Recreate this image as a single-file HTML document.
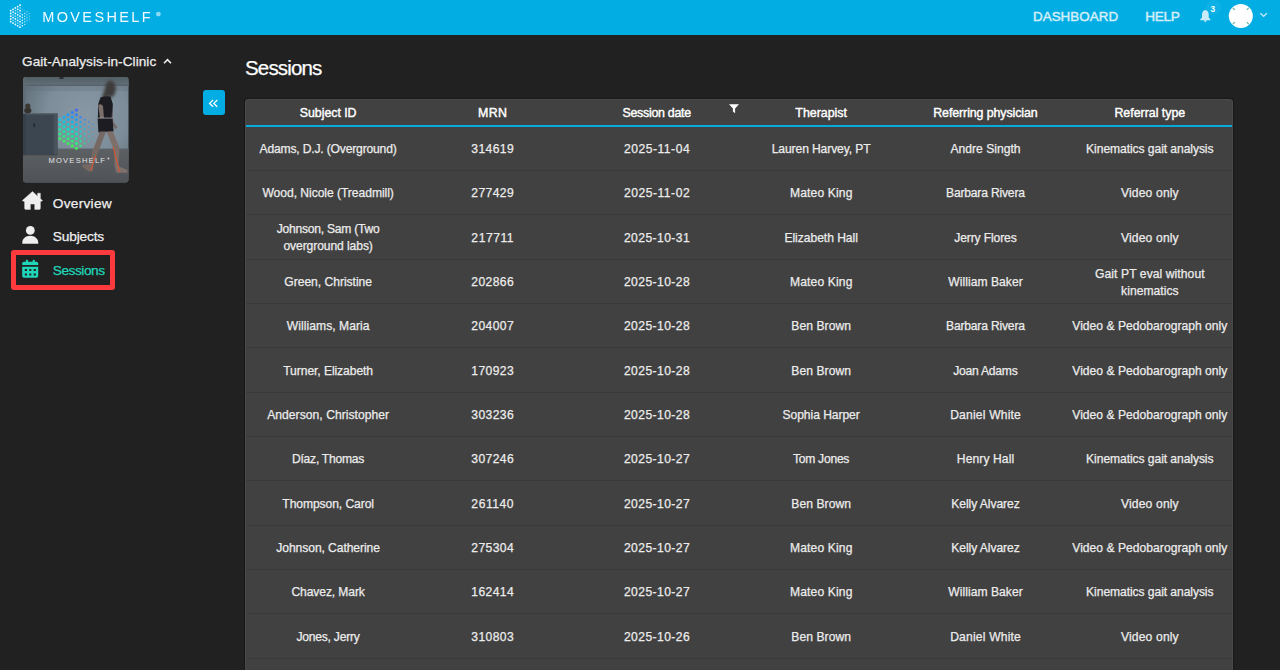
<!DOCTYPE html>
<html><head><meta charset="utf-8">
<style>
html,body{margin:0;padding:0;width:1280px;height:670px;overflow:hidden;background:#212121;font-family:"Liberation Sans",sans-serif;}
.t{position:absolute;white-space:nowrap;line-height:1;-webkit-text-stroke:0.25px currentColor;}
#hdr{position:absolute;left:0;top:0;width:1280px;height:35px;background:#02ade4;}
#tbl{position:absolute;left:245px;top:99px;width:986px;height:600px;background:#414141;border:1px solid #4a4a4a;border-radius:3px;box-shadow:0 0 1px 1px rgba(0,0,0,0.25);}
#thead{position:absolute;left:0;top:0;width:986px;height:25px;border-bottom:2px solid #0aa9dd;}
.rd{position:absolute;left:0;width:986px;height:1px;background:#3a3a3a;}
#redbox{position:absolute;left:11px;top:250px;width:94px;height:30px;border:5px solid #fd3b3e;border-radius:3px;}
#collapse{position:absolute;left:203px;top:90px;width:22px;height:25px;background:#02ade4;border-radius:3px;}
#ov{position:absolute;left:0;top:0;}
</style></head><body>
<div id="hdr"></div>
<div id="tbl"><div id="thead"></div>
<div class="rd" style="top:69.90px"></div>
<div class="rd" style="top:114.23px"></div>
<div class="rd" style="top:158.57px"></div>
<div class="rd" style="top:202.90px"></div>
<div class="rd" style="top:247.23px"></div>
<div class="rd" style="top:291.56px"></div>
<div class="rd" style="top:335.90px"></div>
<div class="rd" style="top:380.23px"></div>
<div class="rd" style="top:424.56px"></div>
<div class="rd" style="top:468.90px"></div>
<div class="rd" style="top:513.23px"></div>
<div class="rd" style="top:557.56px"></div>
</div>
<div id="redbox"></div>
<div id="collapse"></div>
<div class="t" style="top:106.80px;font-size:12.4px;font-weight:400;color:#ffffff;letter-spacing:-0.044px;left:246.00px;width:164.33px;text-align:center;text-indent:-0.044px;-webkit-text-stroke:0.4px #fff;">Subject ID</div>
<div class="t" style="top:106.80px;font-size:12.4px;font-weight:400;color:#ffffff;letter-spacing:0.266px;left:410.33px;width:164.33px;text-align:center;text-indent:0.266px;-webkit-text-stroke:0.4px #fff;">MRN</div>
<div class="t" style="top:106.80px;font-size:12.4px;font-weight:400;color:#ffffff;letter-spacing:-0.267px;left:574.67px;width:164.33px;text-align:center;text-indent:-0.267px;-webkit-text-stroke:0.4px #fff;">Session date</div>
<div class="t" style="top:106.80px;font-size:12.4px;font-weight:400;color:#ffffff;letter-spacing:-0.005px;left:739.00px;width:164.33px;text-align:center;text-indent:-0.005px;-webkit-text-stroke:0.4px #fff;">Therapist</div>
<div class="t" style="top:106.80px;font-size:12.4px;font-weight:400;color:#ffffff;letter-spacing:-0.090px;left:903.33px;width:164.33px;text-align:center;text-indent:-0.090px;-webkit-text-stroke:0.4px #fff;">Referring physician</div>
<div class="t" style="top:106.80px;font-size:12.4px;font-weight:400;color:#ffffff;letter-spacing:-0.012px;left:1067.67px;width:164.33px;text-align:center;text-indent:-0.012px;-webkit-text-stroke:0.4px #fff;">Referral type</div>
<div class="t" style="top:143.10px;font-size:12.1px;font-weight:400;color:#ececec;letter-spacing:-0.172px;left:246.00px;width:164.33px;text-align:center;text-indent:-0.172px;">Adams, D.J. (Overground)</div>
<div class="t" style="top:143.10px;font-size:12.1px;font-weight:400;color:#ececec;letter-spacing:0.406px;left:410.33px;width:164.33px;text-align:center;text-indent:0.406px;">314619</div>
<div class="t" style="top:143.10px;font-size:12.1px;font-weight:400;color:#ececec;letter-spacing:0.523px;left:574.67px;width:164.33px;text-align:center;text-indent:0.523px;">2025-11-04</div>
<div class="t" style="top:143.10px;font-size:12.1px;font-weight:400;color:#ececec;letter-spacing:-0.108px;left:739.00px;width:164.33px;text-align:center;text-indent:-0.108px;">Lauren Harvey, PT</div>
<div class="t" style="top:143.10px;font-size:12.1px;font-weight:400;color:#ececec;letter-spacing:0.007px;left:903.33px;width:164.33px;text-align:center;text-indent:0.007px;">Andre Singth</div>
<div class="t" style="top:143.10px;font-size:12.1px;font-weight:400;color:#ececec;letter-spacing:-0.071px;left:1067.67px;width:164.33px;text-align:center;text-indent:-0.071px;">Kinematics gait analysis</div>
<div class="t" style="top:187.44px;font-size:12.1px;font-weight:400;color:#ececec;letter-spacing:-0.042px;left:246.00px;width:164.33px;text-align:center;text-indent:-0.042px;">Wood, Nicole (Treadmill)</div>
<div class="t" style="top:187.44px;font-size:12.1px;font-weight:400;color:#ececec;letter-spacing:0.406px;left:410.33px;width:164.33px;text-align:center;text-indent:0.406px;">277429</div>
<div class="t" style="top:187.44px;font-size:12.1px;font-weight:400;color:#ececec;letter-spacing:0.523px;left:574.67px;width:164.33px;text-align:center;text-indent:0.523px;">2025-11-02</div>
<div class="t" style="top:187.44px;font-size:12.1px;font-weight:400;color:#ececec;letter-spacing:0.142px;left:739.00px;width:164.33px;text-align:center;text-indent:0.142px;">Mateo King</div>
<div class="t" style="top:187.44px;font-size:12.1px;font-weight:400;color:#ececec;letter-spacing:-0.181px;left:903.33px;width:164.33px;text-align:center;text-indent:-0.181px;">Barbara Rivera</div>
<div class="t" style="top:187.44px;font-size:12.1px;font-weight:400;color:#ececec;letter-spacing:0.159px;left:1067.67px;width:164.33px;text-align:center;text-indent:0.159px;">Video only</div>
<div class="t" style="top:223.32px;font-size:12.1px;font-weight:400;color:#ececec;letter-spacing:-0.244px;left:246.00px;width:164.33px;text-align:center;text-indent:-0.244px;">Johnson, Sam (Two</div>
<div class="t" style="top:240.22px;font-size:12.1px;font-weight:400;color:#ececec;letter-spacing:-0.086px;left:246.00px;width:164.33px;text-align:center;text-indent:-0.086px;">overground labs)</div>
<div class="t" style="top:231.77px;font-size:12.1px;font-weight:400;color:#ececec;letter-spacing:0.555px;left:410.33px;width:164.33px;text-align:center;text-indent:0.555px;">217711</div>
<div class="t" style="top:231.77px;font-size:12.1px;font-weight:400;color:#ececec;letter-spacing:0.433px;left:574.67px;width:164.33px;text-align:center;text-indent:0.433px;">2025-10-31</div>
<div class="t" style="top:231.77px;font-size:12.1px;font-weight:400;color:#ececec;letter-spacing:-0.036px;left:739.00px;width:164.33px;text-align:center;text-indent:-0.036px;">Elizabeth Hall</div>
<div class="t" style="top:231.77px;font-size:12.1px;font-weight:400;color:#ececec;letter-spacing:-0.122px;left:903.33px;width:164.33px;text-align:center;text-indent:-0.122px;">Jerry Flores</div>
<div class="t" style="top:231.77px;font-size:12.1px;font-weight:400;color:#ececec;letter-spacing:0.159px;left:1067.67px;width:164.33px;text-align:center;text-indent:0.159px;">Video only</div>
<div class="t" style="top:276.10px;font-size:12.1px;font-weight:400;color:#ececec;letter-spacing:-0.025px;left:246.00px;width:164.33px;text-align:center;text-indent:-0.025px;">Green, Christine</div>
<div class="t" style="top:276.10px;font-size:12.1px;font-weight:400;color:#ececec;letter-spacing:0.406px;left:410.33px;width:164.33px;text-align:center;text-indent:0.406px;">202866</div>
<div class="t" style="top:276.10px;font-size:12.1px;font-weight:400;color:#ececec;letter-spacing:0.433px;left:574.67px;width:164.33px;text-align:center;text-indent:0.433px;">2025-10-28</div>
<div class="t" style="top:276.10px;font-size:12.1px;font-weight:400;color:#ececec;letter-spacing:0.142px;left:739.00px;width:164.33px;text-align:center;text-indent:0.142px;">Mateo King</div>
<div class="t" style="top:276.10px;font-size:12.1px;font-weight:400;color:#ececec;letter-spacing:0.053px;left:903.33px;width:164.33px;text-align:center;text-indent:0.053px;">William Baker</div>
<div class="t" style="top:267.65px;font-size:12.1px;font-weight:400;color:#ececec;letter-spacing:0.080px;left:1067.67px;width:164.33px;text-align:center;text-indent:0.080px;">Gait PT eval without</div>
<div class="t" style="top:284.55px;font-size:12.1px;font-weight:400;color:#ececec;letter-spacing:0.033px;left:1067.67px;width:164.33px;text-align:center;text-indent:0.033px;">kinematics</div>
<div class="t" style="top:320.44px;font-size:12.1px;font-weight:400;color:#ececec;letter-spacing:0.053px;left:246.00px;width:164.33px;text-align:center;text-indent:0.053px;">Williams, Maria</div>
<div class="t" style="top:320.44px;font-size:12.1px;font-weight:400;color:#ececec;letter-spacing:0.406px;left:410.33px;width:164.33px;text-align:center;text-indent:0.406px;">204007</div>
<div class="t" style="top:320.44px;font-size:12.1px;font-weight:400;color:#ececec;letter-spacing:0.433px;left:574.67px;width:164.33px;text-align:center;text-indent:0.433px;">2025-10-28</div>
<div class="t" style="top:320.44px;font-size:12.1px;font-weight:400;color:#ececec;letter-spacing:0.071px;left:739.00px;width:164.33px;text-align:center;text-indent:0.071px;">Ben Brown</div>
<div class="t" style="top:320.44px;font-size:12.1px;font-weight:400;color:#ececec;letter-spacing:-0.181px;left:903.33px;width:164.33px;text-align:center;text-indent:-0.181px;">Barbara Rivera</div>
<div class="t" style="top:320.44px;font-size:12.1px;font-weight:400;color:#ececec;letter-spacing:0.026px;left:1067.67px;width:164.33px;text-align:center;text-indent:0.026px;">Video &amp; Pedobarograph only</div>
<div class="t" style="top:364.77px;font-size:12.1px;font-weight:400;color:#ececec;letter-spacing:-0.072px;left:246.00px;width:164.33px;text-align:center;text-indent:-0.072px;">Turner, Elizabeth</div>
<div class="t" style="top:364.77px;font-size:12.1px;font-weight:400;color:#ececec;letter-spacing:0.406px;left:410.33px;width:164.33px;text-align:center;text-indent:0.406px;">170923</div>
<div class="t" style="top:364.77px;font-size:12.1px;font-weight:400;color:#ececec;letter-spacing:0.433px;left:574.67px;width:164.33px;text-align:center;text-indent:0.433px;">2025-10-28</div>
<div class="t" style="top:364.77px;font-size:12.1px;font-weight:400;color:#ececec;letter-spacing:0.071px;left:739.00px;width:164.33px;text-align:center;text-indent:0.071px;">Ben Brown</div>
<div class="t" style="top:364.77px;font-size:12.1px;font-weight:400;color:#ececec;letter-spacing:-0.228px;left:903.33px;width:164.33px;text-align:center;text-indent:-0.228px;">Joan Adams</div>
<div class="t" style="top:364.77px;font-size:12.1px;font-weight:400;color:#ececec;letter-spacing:0.026px;left:1067.67px;width:164.33px;text-align:center;text-indent:0.026px;">Video &amp; Pedobarograph only</div>
<div class="t" style="top:409.10px;font-size:12.1px;font-weight:400;color:#ececec;letter-spacing:0.046px;left:246.00px;width:164.33px;text-align:center;text-indent:0.046px;">Anderson, Christopher</div>
<div class="t" style="top:409.10px;font-size:12.1px;font-weight:400;color:#ececec;letter-spacing:0.406px;left:410.33px;width:164.33px;text-align:center;text-indent:0.406px;">303236</div>
<div class="t" style="top:409.10px;font-size:12.1px;font-weight:400;color:#ececec;letter-spacing:0.433px;left:574.67px;width:164.33px;text-align:center;text-indent:0.433px;">2025-10-28</div>
<div class="t" style="top:409.10px;font-size:12.1px;font-weight:400;color:#ececec;letter-spacing:-0.058px;left:739.00px;width:164.33px;text-align:center;text-indent:-0.058px;">Sophia Harper</div>
<div class="t" style="top:409.10px;font-size:12.1px;font-weight:400;color:#ececec;letter-spacing:0.191px;left:903.33px;width:164.33px;text-align:center;text-indent:0.191px;">Daniel White</div>
<div class="t" style="top:409.10px;font-size:12.1px;font-weight:400;color:#ececec;letter-spacing:0.026px;left:1067.67px;width:164.33px;text-align:center;text-indent:0.026px;">Video &amp; Pedobarograph only</div>
<div class="t" style="top:453.44px;font-size:12.1px;font-weight:400;color:#ececec;letter-spacing:-0.258px;left:246.00px;width:164.33px;text-align:center;text-indent:-0.258px;">Díaz, Thomas</div>
<div class="t" style="top:453.44px;font-size:12.1px;font-weight:400;color:#ececec;letter-spacing:0.406px;left:410.33px;width:164.33px;text-align:center;text-indent:0.406px;">307246</div>
<div class="t" style="top:453.44px;font-size:12.1px;font-weight:400;color:#ececec;letter-spacing:0.433px;left:574.67px;width:164.33px;text-align:center;text-indent:0.433px;">2025-10-27</div>
<div class="t" style="top:453.44px;font-size:12.1px;font-weight:400;color:#ececec;letter-spacing:-0.247px;left:739.00px;width:164.33px;text-align:center;text-indent:-0.247px;">Tom Jones</div>
<div class="t" style="top:453.44px;font-size:12.1px;font-weight:400;color:#ececec;letter-spacing:0.087px;left:903.33px;width:164.33px;text-align:center;text-indent:0.087px;">Henry Hall</div>
<div class="t" style="top:453.44px;font-size:12.1px;font-weight:400;color:#ececec;letter-spacing:-0.071px;left:1067.67px;width:164.33px;text-align:center;text-indent:-0.071px;">Kinematics gait analysis</div>
<div class="t" style="top:497.77px;font-size:12.1px;font-weight:400;color:#ececec;letter-spacing:-0.082px;left:246.00px;width:164.33px;text-align:center;text-indent:-0.082px;">Thompson, Carol</div>
<div class="t" style="top:497.77px;font-size:12.1px;font-weight:400;color:#ececec;letter-spacing:0.555px;left:410.33px;width:164.33px;text-align:center;text-indent:0.555px;">261140</div>
<div class="t" style="top:497.77px;font-size:12.1px;font-weight:400;color:#ececec;letter-spacing:0.433px;left:574.67px;width:164.33px;text-align:center;text-indent:0.433px;">2025-10-27</div>
<div class="t" style="top:497.77px;font-size:12.1px;font-weight:400;color:#ececec;letter-spacing:0.071px;left:739.00px;width:164.33px;text-align:center;text-indent:0.071px;">Ben Brown</div>
<div class="t" style="top:497.77px;font-size:12.1px;font-weight:400;color:#ececec;letter-spacing:-0.052px;left:903.33px;width:164.33px;text-align:center;text-indent:-0.052px;">Kelly Alvarez</div>
<div class="t" style="top:497.77px;font-size:12.1px;font-weight:400;color:#ececec;letter-spacing:0.159px;left:1067.67px;width:164.33px;text-align:center;text-indent:0.159px;">Video only</div>
<div class="t" style="top:542.10px;font-size:12.1px;font-weight:400;color:#ececec;letter-spacing:-0.074px;left:246.00px;width:164.33px;text-align:center;text-indent:-0.074px;">Johnson, Catherine</div>
<div class="t" style="top:542.10px;font-size:12.1px;font-weight:400;color:#ececec;letter-spacing:0.406px;left:410.33px;width:164.33px;text-align:center;text-indent:0.406px;">275304</div>
<div class="t" style="top:542.10px;font-size:12.1px;font-weight:400;color:#ececec;letter-spacing:0.433px;left:574.67px;width:164.33px;text-align:center;text-indent:0.433px;">2025-10-27</div>
<div class="t" style="top:542.10px;font-size:12.1px;font-weight:400;color:#ececec;letter-spacing:0.142px;left:739.00px;width:164.33px;text-align:center;text-indent:0.142px;">Mateo King</div>
<div class="t" style="top:542.10px;font-size:12.1px;font-weight:400;color:#ececec;letter-spacing:-0.052px;left:903.33px;width:164.33px;text-align:center;text-indent:-0.052px;">Kelly Alvarez</div>
<div class="t" style="top:542.10px;font-size:12.1px;font-weight:400;color:#ececec;letter-spacing:0.026px;left:1067.67px;width:164.33px;text-align:center;text-indent:0.026px;">Video &amp; Pedobarograph only</div>
<div class="t" style="top:586.43px;font-size:12.1px;font-weight:400;color:#ececec;letter-spacing:-0.109px;left:246.00px;width:164.33px;text-align:center;text-indent:-0.109px;">Chavez, Mark</div>
<div class="t" style="top:586.43px;font-size:12.1px;font-weight:400;color:#ececec;letter-spacing:0.406px;left:410.33px;width:164.33px;text-align:center;text-indent:0.406px;">162414</div>
<div class="t" style="top:586.43px;font-size:12.1px;font-weight:400;color:#ececec;letter-spacing:0.433px;left:574.67px;width:164.33px;text-align:center;text-indent:0.433px;">2025-10-27</div>
<div class="t" style="top:586.43px;font-size:12.1px;font-weight:400;color:#ececec;letter-spacing:0.142px;left:739.00px;width:164.33px;text-align:center;text-indent:0.142px;">Mateo King</div>
<div class="t" style="top:586.43px;font-size:12.1px;font-weight:400;color:#ececec;letter-spacing:0.053px;left:903.33px;width:164.33px;text-align:center;text-indent:0.053px;">William Baker</div>
<div class="t" style="top:586.43px;font-size:12.1px;font-weight:400;color:#ececec;letter-spacing:-0.071px;left:1067.67px;width:164.33px;text-align:center;text-indent:-0.071px;">Kinematics gait analysis</div>
<div class="t" style="top:630.77px;font-size:12.1px;font-weight:400;color:#ececec;letter-spacing:-0.242px;left:246.00px;width:164.33px;text-align:center;text-indent:-0.242px;">Jones, Jerry</div>
<div class="t" style="top:630.77px;font-size:12.1px;font-weight:400;color:#ececec;letter-spacing:0.406px;left:410.33px;width:164.33px;text-align:center;text-indent:0.406px;">310803</div>
<div class="t" style="top:630.77px;font-size:12.1px;font-weight:400;color:#ececec;letter-spacing:0.433px;left:574.67px;width:164.33px;text-align:center;text-indent:0.433px;">2025-10-26</div>
<div class="t" style="top:630.77px;font-size:12.1px;font-weight:400;color:#ececec;letter-spacing:0.071px;left:739.00px;width:164.33px;text-align:center;text-indent:0.071px;">Ben Brown</div>
<div class="t" style="top:630.77px;font-size:12.1px;font-weight:400;color:#ececec;letter-spacing:0.191px;left:903.33px;width:164.33px;text-align:center;text-indent:0.191px;">Daniel White</div>
<div class="t" style="top:630.77px;font-size:12.1px;font-weight:400;color:#ececec;letter-spacing:0.159px;left:1067.67px;width:164.33px;text-align:center;text-indent:0.159px;">Video only</div>
<div class="t" style="top:55.38px;font-size:13.6px;font-weight:400;color:#eeeeee;letter-spacing:0.058px;left:22.00px;">Gait-Analysis-in-Clinic</div>
<div class="t" style="top:196.80px;font-size:13.7px;font-weight:400;color:#eeeeee;letter-spacing:0.262px;left:52.80px;">Overview</div>
<div class="t" style="top:230.30px;font-size:13.7px;font-weight:400;color:#eeeeee;letter-spacing:-0.160px;left:52.80px;">Subjects</div>
<div class="t" style="top:264.40px;font-size:13.7px;font-weight:400;color:#1fd6b9;letter-spacing:-0.463px;left:52.80px;">Sessions</div>
<div class="t" style="top:57.84px;font-size:20.5px;font-weight:400;color:#ffffff;letter-spacing:-0.836px;left:245.00px;">Sessions</div>
<div class="t" style="top:9.75px;font-size:13.4px;font-weight:400;color:#d6eff9;letter-spacing:0.028px;left:1033.00px;-webkit-text-stroke:0.45px #d6eff9;">DASHBOARD</div>
<div class="t" style="top:9.58px;font-size:13.6px;font-weight:400;color:#d6eff9;letter-spacing:-0.355px;left:1145.30px;-webkit-text-stroke:0.45px #d6eff9;">HELP</div>
<svg id="ov" width="1280" height="670" viewBox="0 0 1280 670">
<defs>
<clipPath id="thc"><rect x="23" y="77" width="105.5" height="105.5" rx="3"/></clipPath>
<radialGradient id="wall" gradientUnits="userSpaceOnUse" cx="88" cy="114" r="72" fx="85" fy="116">
<stop offset="0" stop-color="#8899a5"/><stop offset="0.55" stop-color="#7d8e9a"/><stop offset="1" stop-color="#5f6d77"/>
</radialGradient>
<linearGradient id="ceil" x1="0" y1="0" x2="0" y2="1">
<stop offset="0" stop-color="#535e65"/><stop offset="1" stop-color="#64717a"/>
</linearGradient>
<linearGradient id="floor" x1="0" y1="0" x2="0" y2="1">
<stop offset="0" stop-color="#5d6063"/><stop offset="1" stop-color="#4f5256"/>
</linearGradient>
<filter id="blur1" x="-20%" y="-20%" width="140%" height="140%"><feGaussianBlur stdDeviation="0.6"/></filter>
<filter id="blur2" x="-50%" y="-50%" width="200%" height="200%"><feGaussianBlur stdDeviation="1.5"/></filter>
</defs>
<!-- header logo -->
<g><circle cx="10.70" cy="10.70" r="0.90" fill="#ffffff" opacity="1.00"/>
<circle cx="10.70" cy="13.45" r="0.90" fill="#ffffff" opacity="1.00"/>
<circle cx="10.70" cy="16.20" r="0.90" fill="#ffffff" opacity="1.00"/>
<circle cx="10.70" cy="18.95" r="0.90" fill="#ffffff" opacity="1.00"/>
<circle cx="10.70" cy="21.70" r="0.90" fill="#ffffff" opacity="1.00"/>
<circle cx="13.03" cy="9.32" r="0.90" fill="#ffffff" opacity="1.00"/>
<circle cx="13.03" cy="12.07" r="0.90" fill="#ffffff" opacity="0.95"/>
<circle cx="13.03" cy="14.82" r="0.90" fill="#ffffff" opacity="0.50"/>
<circle cx="13.03" cy="17.57" r="0.90" fill="#ffffff" opacity="0.95"/>
<circle cx="13.03" cy="20.32" r="0.90" fill="#ffffff" opacity="0.50"/>
<circle cx="13.03" cy="23.07" r="0.90" fill="#ffffff" opacity="1.00"/>
<circle cx="15.36" cy="7.95" r="0.90" fill="#ffffff" opacity="1.00"/>
<circle cx="15.36" cy="10.70" r="0.90" fill="#ffffff" opacity="0.50"/>
<circle cx="15.36" cy="13.45" r="0.90" fill="#ffffff" opacity="0.95"/>
<circle cx="15.36" cy="16.20" r="0.90" fill="#ffffff" opacity="0.50"/>
<circle cx="15.36" cy="18.95" r="0.90" fill="#ffffff" opacity="0.95"/>
<circle cx="15.36" cy="21.70" r="0.90" fill="#ffffff" opacity="0.50"/>
<circle cx="15.36" cy="24.45" r="0.90" fill="#ffffff" opacity="1.00"/>
<circle cx="17.69" cy="6.57" r="0.90" fill="#ffffff" opacity="1.00"/>
<circle cx="17.69" cy="9.32" r="0.90" fill="#ffffff" opacity="0.95"/>
<circle cx="17.69" cy="12.07" r="0.90" fill="#ffffff" opacity="0.50"/>
<circle cx="17.69" cy="14.82" r="0.90" fill="#ffffff" opacity="0.95"/>
<circle cx="17.69" cy="17.57" r="0.90" fill="#ffffff" opacity="0.50"/>
<circle cx="17.69" cy="20.32" r="0.90" fill="#ffffff" opacity="0.95"/>
<circle cx="17.69" cy="23.07" r="0.90" fill="#ffffff" opacity="0.50"/>
<circle cx="17.69" cy="25.82" r="0.90" fill="#ffffff" opacity="1.00"/>
<circle cx="20.02" cy="5.20" r="0.90" fill="#ffffff" opacity="1.00"/>
<circle cx="20.02" cy="7.95" r="0.90" fill="#ffffff" opacity="0.50"/>
<circle cx="20.02" cy="10.70" r="0.90" fill="#ffffff" opacity="0.95"/>
<circle cx="20.02" cy="13.45" r="0.90" fill="#ffffff" opacity="0.50"/>
<circle cx="20.02" cy="16.20" r="0.90" fill="#ffffff" opacity="0.95"/>
<circle cx="20.02" cy="18.95" r="0.90" fill="#ffffff" opacity="0.50"/>
<circle cx="20.02" cy="21.70" r="0.90" fill="#ffffff" opacity="0.95"/>
<circle cx="20.02" cy="24.45" r="0.90" fill="#ffffff" opacity="0.50"/>
<circle cx="20.02" cy="27.20" r="0.90" fill="#ffffff" opacity="1.00"/>
<circle cx="22.35" cy="25.82" r="0.80" fill="#ffffff" opacity="0.90"/>
<circle cx="22.35" cy="23.07" r="0.80" fill="#ffffff" opacity="0.90"/>
<circle cx="22.35" cy="20.32" r="0.80" fill="#ffffff" opacity="0.90"/>
<circle cx="22.35" cy="17.57" r="0.80" fill="#ffffff" opacity="0.90"/>
<circle cx="22.35" cy="14.82" r="0.80" fill="#ffffff" opacity="0.90"/>
<circle cx="22.35" cy="12.07" r="0.80" fill="#ffffff" opacity="0.25"/>
<circle cx="22.35" cy="9.32" r="0.80" fill="#ffffff" opacity="0.25"/>
<circle cx="24.68" cy="24.45" r="0.75" fill="#ffffff" opacity="0.70"/>
<circle cx="24.68" cy="21.70" r="0.75" fill="#ffffff" opacity="0.70"/>
<circle cx="24.68" cy="18.95" r="0.75" fill="#ffffff" opacity="0.70"/>
<circle cx="24.68" cy="16.20" r="0.75" fill="#ffffff" opacity="0.70"/>
<circle cx="24.68" cy="13.45" r="0.75" fill="#ffffff" opacity="0.70"/>
<circle cx="24.68" cy="10.70" r="0.75" fill="#ffffff" opacity="0.20"/>
<circle cx="27.01" cy="23.07" r="0.70" fill="#ffffff" opacity="0.20"/>
<circle cx="27.01" cy="20.32" r="0.70" fill="#ffffff" opacity="0.55"/>
<circle cx="27.01" cy="17.57" r="0.70" fill="#ffffff" opacity="0.55"/>
<circle cx="27.01" cy="14.82" r="0.70" fill="#ffffff" opacity="0.55"/>
<circle cx="27.01" cy="12.07" r="0.70" fill="#ffffff" opacity="0.55"/>
<circle cx="29.34" cy="21.70" r="0.65" fill="#ffffff" opacity="0.15"/>
<circle cx="29.34" cy="18.95" r="0.65" fill="#ffffff" opacity="0.45"/>
<circle cx="29.34" cy="16.20" r="0.65" fill="#ffffff" opacity="0.45"/>
<circle cx="29.34" cy="13.45" r="0.65" fill="#ffffff" opacity="0.45"/></g>
<!-- MOVESHELF header -->
<text x="42.3" y="21.9" font-family="Liberation Sans" font-size="14.5" letter-spacing="2.345" fill="#ffffff" opacity="0.95">MOVESHELF</text>
<circle cx="158.4" cy="14.1" r="2.4" fill="#ffffff" opacity="0.55"/>
<!-- bell -->
<circle cx="1213.6" cy="7.4" r="7.6" fill="#ffffff" opacity="0.05"/>
<path d="M1205.35,10 C1203.2,10.3 1202,12.2 1202,14.6 L1202,17.6 L1200.2,19.6 L1200.2,20.2 L1210.5,20.2 L1210.5,19.6 L1208.7,17.6 L1208.7,14.6 C1208.7,12.2 1207.5,10.3 1205.35,10 Z M1203.9,20.6 L1206.8,20.6 C1206.8,21.5 1206.1,22 1205.35,22 C1204.6,22 1203.9,21.5 1203.9,20.6 Z" fill="#c9ebf8"/>
<text x="1212.9" y="12.1" font-family="Liberation Sans" font-weight="700" font-size="8.2" fill="#ffffff" text-anchor="middle">3</text>
<!-- avatar -->
<circle cx="1240.8" cy="16" r="12" fill="#ffffff"/>
<path d="M1232.9,7.9 l1.9,1.9 M1248.7,7.9 l-1.9,1.9 M1232.9,24.1 l1.9,-1.9 M1248.7,24.1 l-1.9,-1.9" stroke="#3f9f8c" stroke-width="1.1" opacity="0.85"/>
<!-- chevron down -->
<path d="M1260.4,13.3 L1263.6,16.4 L1266.8,13.3" fill="none" stroke="#cdeaf6" stroke-width="1.3"/>
<!-- caret up -->
<path d="M164,63.2 L167.5,59.6 L171,63.2" fill="none" stroke="#eeeeee" stroke-width="1.6"/>
<!-- collapse chevrons -->
<path d="M213.1,100 L209.6,103.4 L213.1,106.8 M217.3,100 L213.8,103.4 L217.3,106.8" fill="none" stroke="#ffffff" stroke-width="1.3"/>
<!-- filter funnel -->
<path d="M729,104.2 L739,104.2 L735.1,108.6 L735.1,113.2 L732.9,111.6 L732.9,108.6 Z" fill="#ffffff"/>
<!-- home icon -->
<path d="M32.5,191.5 L22.3,200.6 L24.6,201.8 L24.6,208.2 Q24.6,209.4 25.8,209.4 L30.4,209.4 L30.4,204.1 L34.7,204.1 L34.7,209.4 L39.2,209.4 Q40.4,209.4 40.4,208.2 L40.4,201.8 L42.6,200.6 L40.4,198.7 L40.4,193.2 L37.6,193.2 L37.6,196.2 Z" fill="#eeeeee" stroke="#eeeeee" stroke-width="0.4" stroke-linejoin="round"/>
<!-- person icon -->
<circle cx="30.3" cy="230.4" r="4.4" fill="#eeeeee"/>
<path d="M22.3,243.8 L22.3,242.6 C22.3,238.6 25.8,235.8 30.2,235.8 C34.6,235.8 38.2,238.6 38.2,242.6 L38.2,243.8 Z" fill="#eeeeee"/>
<!-- calendar icon -->
<g fill="#1fd6b9">
<rect x="25.9" y="259.8" width="2.1" height="3.2" rx="0.8"/>
<rect x="32.7" y="259.8" width="2.1" height="3.2" rx="0.8"/>
<path d="M22.2,265 L22.2,263.6 Q22.2,261.8 24,261.8 L36.4,261.8 Q38.2,261.8 38.2,263.6 L38.2,265 Z"/>
<path d="M22.2,266.8 L38.2,266.8 L38.2,276 Q38.2,277.8 36.4,277.8 L24,277.8 Q22.2,277.8 22.2,276 Z M24.8,268.9 L24.8,271.1 L27,271.1 L27,268.9 Z M29.3,268.9 L29.3,271.1 L31.3,271.1 L31.3,268.9 Z M33.7,268.9 L33.7,271.1 L35.9,271.1 L35.9,268.9 Z M24.8,273.4 L24.8,275.6 L27,275.6 L27,273.4 Z M29.3,273.4 L29.3,275.6 L31.3,275.6 L31.3,273.4 Z M33.7,273.4 L33.7,275.6 L35.9,275.6 L35.9,273.4 Z" fill-rule="evenodd"/>
</g>
<!-- thumbnail -->
<g clip-path="url(#thc)">
<rect x="23" y="77" width="106" height="106" fill="url(#wall)"/>
<rect x="23" y="77" width="106" height="9" fill="url(#ceil)"/>
<rect x="23" y="84.6" width="106" height="1.4" fill="#56616a" opacity="0.9"/>
<rect x="23" y="86" width="106" height="5" fill="#5f6d77" opacity="0.3"/>
<rect x="23" y="77" width="2.2" height="80" fill="#5f6a72" opacity="0.8"/>
<rect x="59.5" y="77" width="4" height="2" fill="#2a2f33"/>
<rect x="23" y="149.5" width="106" height="34" fill="url(#floor)"/>
<rect x="23" y="148.6" width="106" height="1.8" fill="#5a6166"/>
<!-- cabinet -->
<rect x="23" y="113" width="34.5" height="41.6" fill="#3c4650"/>
<rect x="23" y="113" width="34.5" height="1.4" fill="#57626b"/>
<rect x="53.6" y="114" width="3.9" height="40.6" fill="#48535c"/>
<rect x="23" y="114" width="3" height="40.6" fill="#36404a"/>
<rect x="33.5" y="123.3" width="1.3" height="3.8" fill="#1e2429"/>
<rect x="23" y="154.2" width="34.5" height="1.2" fill="#3a3f43" opacity="0.7"/>
<!-- teddy -->
<g filter="url(#blur1)">
<ellipse cx="27.8" cy="106" rx="2.6" ry="2.6" fill="#3d3832"/>
<ellipse cx="27.8" cy="110.6" rx="3.6" ry="2.8" fill="#35312d"/>
</g>
<!-- person -->
<g filter="url(#blur2)">
<ellipse cx="110.4" cy="89" rx="5.4" ry="8.6" fill="#3e3b3a"/>
<path d="M105.5,88 Q108.5,96 107,102 L101.5,101 Q102.5,93 105.5,88 Z" fill="#403d3b"/>
</g>
<g filter="url(#blur1)">
<path d="M100.5,97.5 Q106,95.5 110.5,96.5 L112.8,104 L112.3,118.3 L97.9,118.3 L98.2,104 Z" fill="#1d1d20"/>
<path d="M98.2,105 Q101,103 103,106 L104.5,125 L107,129.5 L104.5,130.5 L101,126 Z" fill="#7c6e6b"/>
<path d="M112,110 L113.5,122 L117.5,127 L115.5,129.5 L111.5,124 Z" fill="#76696a"/>
<rect x="98" y="117.6" width="14.5" height="1.2" fill="#b9b9bb" opacity="0.8"/>
<path d="M97.6,118.6 L112.5,118.6 L113.6,131.5 L98.5,132.5 Z" fill="#1c1c20"/>
<path d="M100,131.5 L106,131.5 L99,150 L93.5,164 L93,171 L88.5,171.5 L81.5,166 L83,164.5 L89.5,164 L92.5,151 Z" fill="#766864"/>
<path d="M106.5,131.5 L113,131.5 L119.5,148 L118.2,166 L127.5,170 L127.5,172.8 L116.5,172.8 L114.8,167 L114,150 Z" fill="#7d6f6a"/>
</g>
<path d="M95.6,155.8 L90.9,170.6" stroke="#e3502a" stroke-width="1"/>
<path d="M113.1,147 L119.8,172.2" stroke="#e3502a" stroke-width="1"/>
<circle cx="59.90" cy="119.60" r="1.65" fill="#1ac2da" opacity="1.00"/>
<circle cx="59.90" cy="124.38" r="1.65" fill="#18d6c6" opacity="1.00"/>
<circle cx="59.90" cy="129.16" r="1.65" fill="#21dea4" opacity="1.00"/>
<circle cx="59.90" cy="133.94" r="1.65" fill="#2de583" opacity="1.00"/>
<circle cx="59.90" cy="138.72" r="1.65" fill="#3de967" opacity="1.00"/>
<circle cx="64.03" cy="117.21" r="1.65" fill="#1faee8" opacity="1.00"/>
<circle cx="64.03" cy="121.99" r="1.65" fill="#1ac4d8" opacity="1.00"/>
<circle cx="64.03" cy="126.77" r="1.65" fill="#19d6c3" opacity="1.00"/>
<circle cx="64.03" cy="131.55" r="1.65" fill="#22dfa1" opacity="1.00"/>
<circle cx="64.03" cy="136.33" r="1.65" fill="#2ee581" opacity="1.00"/>
<circle cx="64.03" cy="141.11" r="1.65" fill="#3ee964" opacity="1.00"/>
<circle cx="68.16" cy="114.82" r="1.65" fill="#2899f2" opacity="1.00"/>
<circle cx="68.16" cy="119.60" r="1.65" fill="#1fb0e7" opacity="1.00"/>
<circle cx="68.16" cy="124.38" r="1.65" fill="#19c6d7" opacity="1.00"/>
<circle cx="68.16" cy="129.16" r="1.65" fill="#1ad7c0" opacity="1.00"/>
<circle cx="68.16" cy="133.94" r="1.65" fill="#23e09e" opacity="1.00"/>
<circle cx="68.16" cy="138.72" r="1.65" fill="#30e67e" opacity="1.00"/>
<circle cx="68.16" cy="143.50" r="1.65" fill="#40e962" opacity="1.00"/>
<circle cx="72.29" cy="112.43" r="1.65" fill="#3782f1" opacity="1.00"/>
<circle cx="72.29" cy="117.21" r="1.65" fill="#269bf2" opacity="1.00"/>
<circle cx="72.29" cy="121.99" r="1.65" fill="#1fb2e5" opacity="1.00"/>
<circle cx="72.29" cy="126.77" r="1.65" fill="#19c8d6" opacity="1.00"/>
<circle cx="72.29" cy="131.55" r="1.65" fill="#1ad8bd" opacity="1.00"/>
<circle cx="72.29" cy="136.33" r="1.65" fill="#24e09b" opacity="1.00"/>
<circle cx="72.29" cy="141.11" r="1.65" fill="#31e67c" opacity="1.00"/>
<circle cx="72.29" cy="145.89" r="1.65" fill="#41ea5f" opacity="1.00"/>
<circle cx="76.42" cy="110.04" r="1.65" fill="#476af0" opacity="1.00"/>
<circle cx="76.42" cy="114.82" r="1.65" fill="#3684f1" opacity="1.00"/>
<circle cx="76.42" cy="119.60" r="1.65" fill="#259df2" opacity="1.00"/>
<circle cx="76.42" cy="124.38" r="1.65" fill="#1eb4e4" opacity="1.00"/>
<circle cx="76.42" cy="129.16" r="1.65" fill="#19cad4" opacity="1.00"/>
<circle cx="76.42" cy="133.94" r="1.65" fill="#1bd9ba" opacity="1.00"/>
<circle cx="76.42" cy="138.72" r="1.65" fill="#25e198" opacity="1.00"/>
<circle cx="76.42" cy="143.50" r="1.65" fill="#33e679" opacity="1.00"/>
<circle cx="76.42" cy="148.28" r="1.65" fill="#42ea5d" opacity="1.00"/>
<circle cx="80.55" cy="145.89" r="1.30" fill="#34e777" opacity="0.90"/>
<circle cx="80.55" cy="141.11" r="1.30" fill="#26e295" opacity="0.90"/>
<circle cx="80.55" cy="136.33" r="1.30" fill="#1cd9b7" opacity="0.90"/>
<circle cx="80.55" cy="131.55" r="1.30" fill="#18ccd3" opacity="0.90"/>
<circle cx="80.55" cy="126.77" r="1.30" fill="#1eb6e3" opacity="0.90"/>
<circle cx="80.55" cy="121.99" r="1.30" fill="#23a0f2" opacity="0.90"/>
<circle cx="80.55" cy="117.21" r="1.30" fill="#3486f1" opacity="0.90"/>
<circle cx="84.68" cy="143.50" r="1.05" fill="#26e392" opacity="0.80"/>
<circle cx="84.68" cy="138.72" r="1.05" fill="#1ddab4" opacity="0.80"/>
<circle cx="84.68" cy="133.94" r="1.05" fill="#18ced1" opacity="0.80"/>
<circle cx="84.68" cy="129.16" r="1.05" fill="#1db8e1" opacity="0.80"/>
<circle cx="84.68" cy="124.38" r="1.05" fill="#23a2f1" opacity="0.80"/>
<circle cx="84.68" cy="119.60" r="1.05" fill="#3388f1" opacity="0.80"/>
<circle cx="88.81" cy="141.11" r="0.90" fill="#1edbb1" opacity="0.65"/>
<circle cx="88.81" cy="136.33" r="0.90" fill="#17d0d0" opacity="0.65"/>
<circle cx="88.81" cy="131.55" r="0.90" fill="#1dbae0" opacity="0.65"/>
<circle cx="88.81" cy="126.77" r="0.90" fill="#22a4ef" opacity="0.65"/>
<circle cx="88.81" cy="121.99" r="0.90" fill="#318bf1" opacity="0.65"/>
<circle cx="92.94" cy="138.72" r="0.80" fill="#17d2cf" opacity="0.50"/>
<circle cx="92.94" cy="133.94" r="0.80" fill="#1cbcde" opacity="0.50"/>
<circle cx="92.94" cy="129.16" r="0.80" fill="#22a5ee" opacity="0.50"/>
<circle cx="92.94" cy="124.38" r="0.80" fill="#308df1" opacity="0.50"/>
<text x="48.4" y="163.2" font-family="Liberation Sans" font-size="7.6" letter-spacing="1.22" fill="#e4e4e4">MOVESHELF</text>
<circle cx="108.4" cy="158.6" r="1" fill="#d0d0d0"/>
</g>
</svg>
</body></html>
